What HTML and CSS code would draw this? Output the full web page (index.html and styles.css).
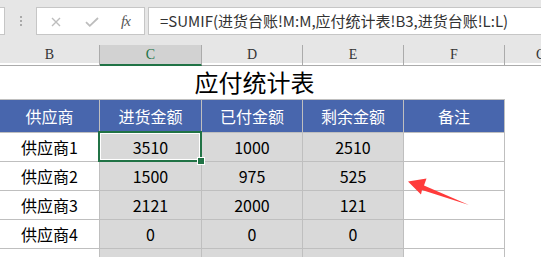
FILE: index.html
```html
<!DOCTYPE html>
<html lang="zh">
<head>
<meta charset="utf-8">
<title>应付统计表</title>
<link rel="stylesheet" href="styles.css">
</head>
<body>
<div class="app">
  <div class="fbar">
    <div class="namebox"></div>
    <div class="grip"><i></i><i></i><i></i></div>
    <div class="fnbtns">
      <svg class="ico-x" width="10" height="10" viewBox="0 0 10 10"><path d="M1 1L9 9M9 1L1 9" stroke="#bdbdbd" stroke-width="1.4" fill="none"/></svg>
      <svg class="ico-ok" width="14" height="10" viewBox="0 0 14 10"><path d="M1 5.2L4.8 8.8L13 1" stroke="#bdbdbd" stroke-width="1.8" fill="none"/></svg>
      <span class="fx">fx</span>
    </div>
    <div class="formula">=SUMIF(进货台账!M:M,应付统计表!B3,进货台账!L:L)</div>
  </div>
  <div class="colhdr">
    <div class="ch">B</div>
    <div class="ch sel">C</div>
    <div class="ch">D</div>
    <div class="ch">E</div>
    <div class="ch">F</div>
    <div class="ch g">G</div>
  </div>
  <div class="sheet">
    <div class="title">应付统计表</div>
    <div class="blank"></div>

    <div class="hd">供应商</div>
    <div class="hd">进货金额</div>
    <div class="hd">已付金额</div>
    <div class="hd">剩余金额</div>
    <div class="hd">备注</div>
    <div class="blank"></div>

    <div class="td">供应商1</div>
    <div class="td gr active">3510<span class="selbox"></span><span class="handle"></span></div>
    <div class="td gr">1000</div>
    <div class="td gr">2510</div>
    <div class="td"></div>
    <div class="blank"></div>

    <div class="td">供应商2</div>
    <div class="td gr">1500</div>
    <div class="td gr">975</div>
    <div class="td gr">525</div>
    <div class="td"></div>
    <div class="blank"></div>

    <div class="td">供应商3</div>
    <div class="td gr">2121</div>
    <div class="td gr">2000</div>
    <div class="td gr">121</div>
    <div class="td"></div>
    <div class="blank"></div>

    <div class="td">供应商4</div>
    <div class="td gr">0</div>
    <div class="td gr">0</div>
    <div class="td gr">0</div>
    <div class="td"></div>
    <div class="blank"></div>

    <div class="td"></div>
    <div class="td gr"></div>
    <div class="td gr"></div>
    <div class="td gr"></div>
    <div class="td"></div>
    <div class="blank"></div>
  </div>
  <svg class="arrow" width="541" height="257" viewBox="0 0 541 257">
    <polygon points="408,181.5 426.5,178.5 424,185.5 469,205 422,190 421,194.5" fill="#ff3b3b"/>
  </svg>
</div>
</body>
</html>
```
FILE: styles.css
```css
* { box-sizing: border-box; }
html, body { margin: 0; padding: 0; }
body {
  width: 541px;
  height: 257px;
  overflow: hidden;
  background: #ffffff;
  font-family: "Noto Sans CJK SC", "Noto Sans", sans-serif;
}
.app {
  position: relative;
  width: 541px;
  height: 257px;
  overflow: hidden;
}
.fbar {
  height: 45px;
  background: #e6e6e6;
  display: flex;
  align-items: flex-start;
  padding-top: 7px;
}
.namebox {
  width: 5px;
  height: 28px;
  background: #fff;
  border: 1px solid #c6c6c6;
  border-left: none;
}
.grip {
  width: 31px;
  height: 28px;
  display: flex;
  flex-direction: column;
  align-items: center;
  justify-content: center;
  gap: 2px;
}
.grip i {
  display: block;
  width: 2px;
  height: 2px;
  background: #a9a9a9;
}
.fnbtns {
  width: 109px;
  height: 28px;
  background: #fff;
  border: 1px solid #c6c6c6;
  display: flex;
  align-items: center;
  padding-left: 14px;
}
.ico-x { margin-top: 1px; }
.ico-ok { margin-left: 24px; margin-top: 2px; }
.fx {
  margin-left: 22px;
  font-family: "Liberation Serif", serif;
  font-style: italic;
  font-size: 15px;
  color: #555;
  letter-spacing: -1px;
}
.formula {
  flex: 1;
  margin-left: 3px;
  margin-right: -2px;
  height: 28px;
  background: #fff;
  border: 1px solid #c6c6c6;
  padding-left: 11px;
  font-size: 15px;
  line-height: 26px;
  color: #333;
  white-space: nowrap;
  overflow: hidden;
}
.colhdr {
  height: 18px;
  background: #e6e6e6;
  display: grid;
  grid-template-columns: 100px 102px 101px 101px 101px 1fr;
}
.ch {
  border-right: 1px solid #ababab;
  border-bottom: 1px solid #ababab;
  font-family: "Liberation Serif", serif;
  font-size: 14px;
  line-height: 18px;
  padding-top: 1px;
  text-align: center;
  color: #333;
}
.ch.sel {
  background: #d2d2d2;
  color: #217346;
  border-bottom: 2px solid #217346;
}
.ch.g { border-right: none; text-align: left; padding-left: 31px; }
.sheet {
  display: grid;
  grid-template-columns: 100px 102px 101px 101px 101px 1fr;
  grid-template-rows: 37px 33px 29px 29px 29px 29px 29px;
}
.title {
  grid-column: 1 / 6;
  border-bottom: 1px solid #bfbfbf;
  display: flex;
  align-items: center;
  justify-content: center;
  font-size: 24px;
  color: #000;
  padding-left: 4px;
  padding-top: 1px;
}
.hd, .td {
  border-right: 1px solid #bfbfbf;
  border-bottom: 1px solid #bfbfbf;
  display: flex;
  align-items: center;
  justify-content: center;
  font-size: 16px;
}
.hd {
  background: #4866ad;
  color: #fff;
}
.td { color: #000; }
.td.gr { background: #d9d9d9; }
.active { position: relative; }
.selbox {
  position: absolute;
  left: -2px;
  top: -2px;
  right: -1px;
  bottom: -1px;
  border: 2px solid #217346;
  box-shadow: inset 0 0 0 1px #ffffff;
}
.handle {
  position: absolute;
  right: -3px;
  bottom: -3px;
  width: 6px;
  height: 6px;
  background: #217346;
  outline: 1px solid #ffffff;
}
.arrow {
  position: absolute;
  left: 0;
  top: 0;
  pointer-events: none;
}
```
